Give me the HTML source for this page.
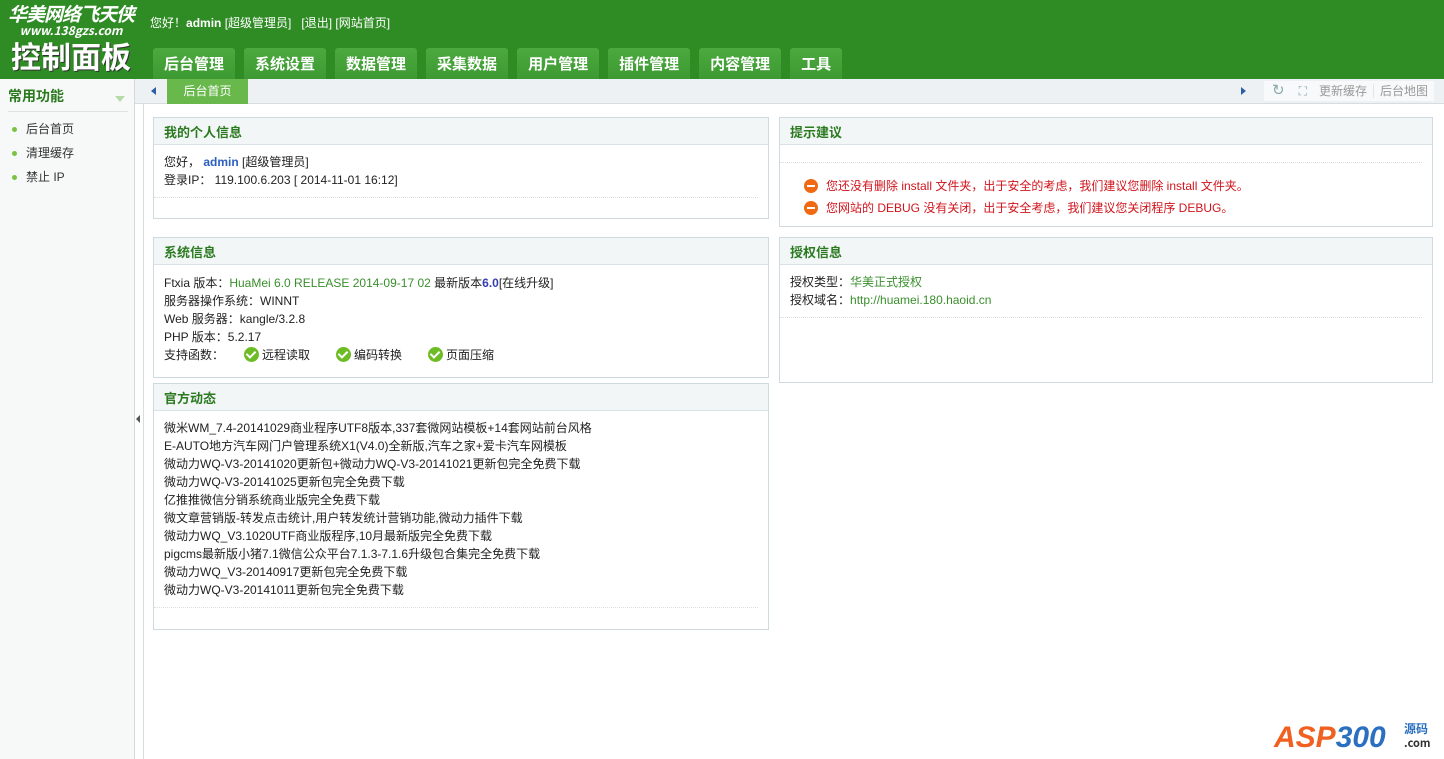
<!DOCTYPE html>
<html><head><meta charset="utf-8"><style>
*{margin:0;padding:0;box-sizing:border-box}
body{width:1444px;height:759px;overflow:hidden;font:12px/18px "Liberation Sans","Noto Sans CJK SC",sans-serif;color:#222;background:#fff;position:relative}
.hd{position:absolute;left:0;top:0;width:1444px;height:79px;background:#2f8c24}
.logo{position:absolute;left:6px;top:4px;color:#fff;font-weight:bold;font-family:"Noto Sans CJK SC",sans-serif;text-align:center;width:130px}
.logo .a{font-size:19px;line-height:20px;font-style:italic;letter-spacing:-1px}
.logo .b{font-size:12px;line-height:13px;font-style:italic}
.logo .c{font-size:30px;line-height:36px;text-shadow:1px 1px 0 #333}
.hello{position:absolute;left:150px;top:14px;color:#fff;font-size:12px}
.nav{position:absolute;left:153px;top:48px}
.nav span{float:left;height:31px;margin-right:9px;padding:0 11px;line-height:31px;color:#fff;font-size:15px;font-weight:bold;background:linear-gradient(#4ca93f,#3d9a32);border-radius:3px 3px 0 0;font-family:"Noto Sans CJK SC",sans-serif}
.side{position:absolute;left:0;top:79px;width:135px;height:680px;background:#f7f9f8;border-right:1px solid #d3dbd7}
.side h3{margin:8px 6px 0 8px;height:25px;font-size:14px;color:#2b7a20;border-bottom:1px solid #dde4df;font-family:"Noto Sans CJK SC",sans-serif}
.side h3 i{position:absolute;left:115px;top:17px;border:5px solid transparent;border-top:6px solid #b6dba7}
.side ul{list-style:none;margin-top:5px}
.side li{height:24px;line-height:24px;padding-left:26px;position:relative;color:#333}
.side li:before{content:"";position:absolute;left:12px;top:10px;width:5px;height:5px;border-radius:50%;background:#7ac143}
.tb{position:absolute;left:135px;top:79px;width:1309px;height:25px;background:#eef1f3;border-bottom:1px solid #d5dde2}
.tab{position:absolute;left:32px;top:0;width:81px;height:25px;background:#69b84c;color:#fff;text-align:center;line-height:25px}
.tools{position:absolute;right:10px;top:2px;height:20px;background:#f8f9fa;color:#999;line-height:20px}
.main{position:absolute;left:143px;top:104px;width:1301px;height:655px;background:#fff;border-left:1px solid #d5dde2}
.p{position:absolute;border:1px solid #cfdae0;background:#fff}
.p h4{height:27px;line-height:27px;background:#f3f6f7;border-bottom:1px solid #d9e2e6;padding-left:10px;color:#2b7a20;font-size:13px;font-family:"Noto Sans CJK SC",sans-serif}
.p .bd{padding:8px 10px;border-bottom:1px dotted #ddd;margin:0 10px 0 0}
.g{color:#3a8f2d}.bl{color:#2a5fbf;font-weight:bold}
.red{color:#d0141c;padding-left:24px;position:relative}
.red:before{content:"";position:absolute;left:2px;top:2px;width:14px;height:14px;border-radius:50%;background:#f06a14}
.red:after{content:"";position:absolute;left:5px;top:8px;width:8px;height:2px;background:#fff}
.ok{display:inline-block;width:15px;height:15px;border-radius:50%;background:#6ebc25;vertical-align:-3px;margin:0 3px 0 0;position:relative}
.ok:after{content:"";position:absolute;left:4px;top:2px;width:4px;height:7px;border:solid #fff;border-width:0 2px 2px 0;transform:rotate(45deg)}
</style></head><body>
<div class="hd">
<div class="logo"><div class="a">华美网络飞天侠</div><div class="b">www.138gzs.com</div><div class="c">控制面板</div></div>
<div class="hello">您好！<b>admin</b> [超级管理员] &nbsp; [退出] [网站首页]</div>
<div class="nav"><span>后台管理</span><span>系统设置</span><span>数据管理</span><span>采集数据</span><span>用户管理</span><span>插件管理</span><span>内容管理</span><span>工具</span></div>
</div>
<div class="side"><h3>常用功能<i></i></h3><ul><li>后台首页</li><li>清理缓存</li><li>禁止 IP</li></ul></div>
<div class="tb"><span style="position:absolute;left:16px;top:8px;border:4px solid transparent;border-right:5px solid #2a5fa8;border-left:0"></span><div class="tab">后台首页</div>
<span style="position:absolute;right:198px;top:8px;border:4px solid transparent;border-left:5px solid #2a5fa8;border-right:0"></span>
<div class="tools"><span style="color:#8aa;padding:0 8px;font-size:15px">↻</span><span style="color:#8aa;padding:0 6px">⛶</span><span style="padding:0 6px">更新缓存</span><span style="padding:0 6px;border-left:1px solid #e3e6e8">后台地图</span></div></div>
<div class="main"></div>
<span style="position:absolute;left:136px;top:415px;border:4px solid transparent;border-right:4px solid #555;border-left:0"></span>
<div class="p" style="left:153px;top:117px;width:616px;height:102px"><h4>我的个人信息</h4><div class="bd">您好， <span class="bl">admin</span> [超级管理员]<br>登录IP： 119.100.6.203 [ 2014-11-01 16:12]</div></div>
<div class="p" style="left:779px;top:117px;width:654px;height:110px"><h4>提示建议</h4><div class="bd" style="height:18px;padding:0"></div><div style="padding:14px 10px 0 22px"><div class="red">您还没有删除 install 文件夹，出于安全的考虑，我们建议您删除 install 文件夹。</div><div class="red" style="margin-top:4px">您网站的 DEBUG 没有关闭，出于安全考虑，我们建议您关闭程序 DEBUG。</div></div></div>
<div class="p" style="left:153px;top:237px;width:616px;height:141px"><h4>系统信息</h4><div style="padding:9px 10px">Ftxia 版本：<span class="g">HuaMei 6.0 RELEASE 2014-09-17 02</span> 最新版本<span class="bl" style="color:#3340b0">6.0</span>[在线升级]<br>服务器操作系统：WINNT<br>Web 服务器：kangle/3.2.8<br>PHP 版本：5.2.17<br>支持函数：<span style="display:inline-block;width:20px"></span><span class="ok"></span>远程读取<span style="display:inline-block;width:26px"></span><span class="ok"></span>编码转换<span style="display:inline-block;width:26px"></span><span class="ok"></span>页面压缩</div></div>
<div class="p" style="left:779px;top:237px;width:654px;height:146px"><h4>授权信息</h4><div class="bd">授权类型：<span class="g">华美正式授权</span><br>授权域名：<span class="g">http://huamei.180.haoid.cn</span></div></div>
<div class="p" style="left:153px;top:383px;width:616px;height:247px"><h4>官方动态</h4><div class="bd">微米WM_7.4-20141029商业程序UTF8版本,337套微网站模板+14套网站前台风格<br>E-AUTO地方汽车网门户管理系统X1(V4.0)全新版,汽车之家+爱卡汽车网模板<br>微动力WQ-V3-20141020更新包+微动力WQ-V3-20141021更新包完全免费下载<br>微动力WQ-V3-20141025更新包完全免费下载<br>亿推推微信分销系统商业版完全免费下载<br>微文章营销版-转发点击统计,用户转发统计营销功能,微动力插件下载<br>微动力WQ_V3.1020UTF商业版程序,10月最新版完全免费下载<br>pigcms最新版小猪7.1微信公众平台7.1.3-7.1.6升级包合集完全免费下载<br>微动力WQ_V3-20140917更新包完全免费下载<br>微动力WQ-V3-20141011更新包完全免费下载</div></div>
<div style="position:absolute;left:1274px;top:722px;font:italic bold 30px/32px 'Liberation Sans',sans-serif;color:#f06020">ASP<span style="color:#2a6fc0">300</span></div>
<div style="position:absolute;left:1404px;top:722px;font:bold 12px/14px 'Noto Sans CJK SC',sans-serif;color:#2a6fc0">源码<br><span style="color:#333;font-size:11px">.com</span></div>
</body></html>
